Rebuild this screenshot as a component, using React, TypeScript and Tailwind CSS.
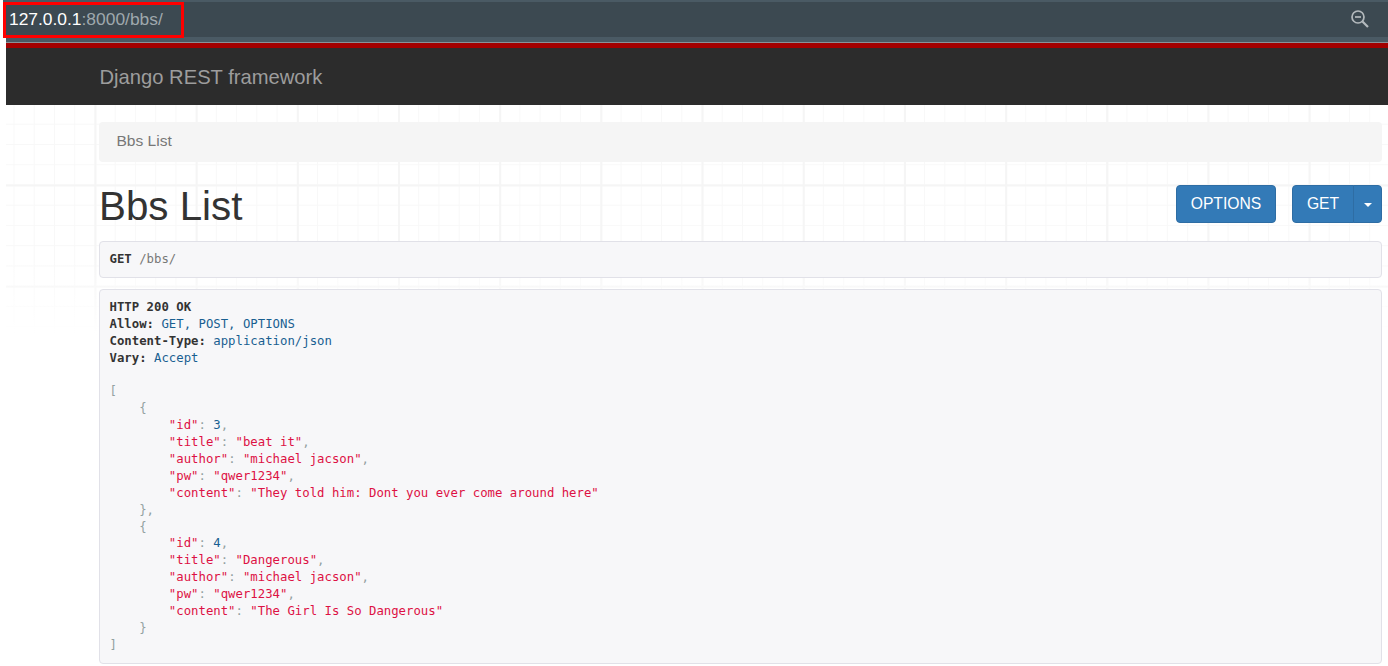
export default function App() {
  const sans = "font-['Liberation_Sans',Arial,sans-serif]";
  const K = ({ children }: { children: React.ReactNode }) => <span className="text-[#dd1144]">{children}</span>;
  const P = ({ children }: { children: React.ReactNode }) => <span className="text-[#93a1a1]">{children}</span>;
  const N = ({ children }: { children: React.ReactNode }) => <span className="text-[#195f91]">{children}</span>;
  const H = ({ children }: { children: React.ReactNode }) => <b className="font-bold text-[#333]">{children}</b>;
  const item = (id: string, title: string, content: string, end: string) => (
    <>
      <P>{"    {"}</P>{"\n"}
      {"        "}<K>"id"</K><P>: </P><N>{id}</N><P>,</P>{"\n"}
      {"        "}<K>"title"</K><P>: </P><K>"{title}"</K><P>,</P>{"\n"}
      {"        "}<K>"author"</K><P>: </P><K>"michael jacson"</K><P>,</P>{"\n"}
      {"        "}<K>"pw"</K><P>: </P><K>"qwer1234"</K><P>,</P>{"\n"}
      {"        "}<K>"content"</K><P>: </P><K>"{content}"</K>{"\n"}
      <P>{"    }" + end}</P>{"\n"}
    </>
  );
  return (
    <div className={`h-[666px] w-[1388px] overflow-hidden bg-white ${sans}`}>
      <div className="ml-[3px] flex h-[37px] items-start justify-between border-t-2 border-[#4a5a64] bg-[#3c4951]">
        <div className="relative flex h-[36px] w-[181px] items-center border-[3px] border-[#ff0000] pb-px pl-[3px] text-[17.4px] text-[#9fa8ad]">
          <span className="text-white">127.0.0.1</span>:8000/bbs/
        </div>
        <div className="flex h-[33px] items-center pr-[18px]">
          <svg width="20" height="20" viewBox="0 0 20 20" fill="none" stroke="#b4babd" strokeWidth="1.7">
            <circle cx="8" cy="8" r="6" />
            <path d="M5 8h6" />
            <path d="M12.5 12.5l5.5 5.5" strokeWidth="2.2" />
          </svg>
        </div>
      </div>
      <div className="ml-[6px]">
        <div className="h-[5px] bg-[#4a5a64]" />
        <div className="h-px bg-[#8a9298]" />
        <div className="h-[5px] bg-[#a30000]" />
        <div className="flex h-[57px] items-center bg-[#2c2c2c] pl-[93.5px] pt-[2px] text-[20.2px] text-[#9d9d9d]">Django REST framework</div>
        <div className="h-[561px] bg-white pl-[93px] pr-[6px] pt-[17px] [background-image:linear-gradient(to_bottom,transparent_150px,#ffffff_230px),linear-gradient(90deg,#f5f5f5_1.5px,transparent_1.5px),linear-gradient(180deg,#f5f5f5_1.5px,transparent_1.5px),linear-gradient(90deg,#f8f8f8_1px,transparent_1px),linear-gradient(180deg,#f8f8f8_1px,transparent_1px)] [background-size:100%_100%,101.2px_101.2px,101.2px_101.2px,20.24px_20.24px,20.24px_20.24px] [background-position:0_0,88.5px_79.5px,88.5px_79.5px,7.54px_18.78px,7.54px_18.78px]">
          <div className="flex h-[40px] items-center rounded-[4px] bg-[#f5f5f5] pb-[2px] pl-[17.5px] text-[15.55px] text-[#777]">Bbs List</div>
          <div className="mt-[23px] flex h-[38px] items-center justify-between">
            <h1 className="mt-[6px] text-[40.3px] font-normal leading-none text-[#333]">Bbs List</h1>
            <div className="flex text-[15.7px] text-white">
              <div className="flex h-[38px] w-[100px] items-center justify-center rounded-[4px] border border-[#2e6da4] bg-[#337ab7]">OPTIONS</div>
              <div className="ml-[16px] flex h-[38px] w-[62px] items-center justify-center rounded-l-[4px] border border-[#2e6da4] bg-[#337ab7]">GET</div>
              <div className="-ml-px flex h-[38px] w-[29px] items-center justify-center rounded-r-[4px] border border-[#2e6da4] bg-[#337ab7]">
                <span className="mt-px block h-0 w-0 border-x-[4.5px] border-t-[4.5px] border-x-transparent border-t-white" />
              </div>
            </div>
          </div>
          <pre className="mt-[18px] h-[37px] rounded-[4px] border border-[#e1e1e8] bg-[#f7f7f9] pl-[9.5px] pt-[8.5px] font-['DejaVu_Sans_Mono',monospace] text-[12.32px] leading-[16.9px] text-[#777]"><H>GET</H> /bbs/</pre>
          <pre className="mt-[11px] h-[375px] rounded-[4px] border border-[#e1e1e8] bg-[#f7f7f9] pl-[9.5px] pt-[8.8px] font-['DejaVu_Sans_Mono',monospace] text-[12.32px] leading-[16.9px] text-[#333]">
            <H>HTTP 200 OK</H>{"\n"}
            <H>Allow:</H> <N>GET, POST, OPTIONS</N>{"\n"}
            <H>Content-Type:</H> <N>application/json</N>{"\n"}
            <H>Vary:</H> <N>Accept</N>{"\n"}
            {"\n"}
            <P>[</P>{"\n"}
            {item("3", "beat it", "They told him: Dont you ever come around here", ",")}
            {item("4", "Dangerous", "The Girl Is So Dangerous", "")}
            <P>]</P>
          </pre>
        </div>
      </div>
    </div>
  );
}
